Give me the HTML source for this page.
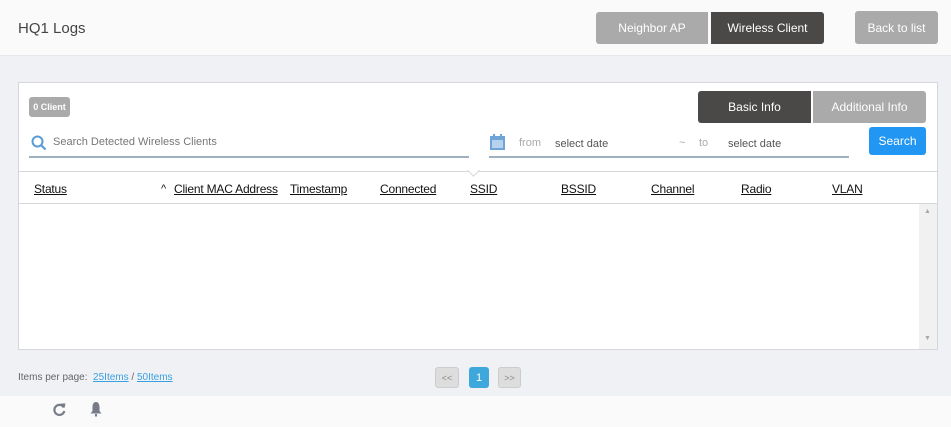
<!DOCTYPE html>
<html><head><style>
*{margin:0;padding:0;box-sizing:border-box}
body{width:951px;height:427px;overflow:hidden;background:#f0f1f5;font-family:"Liberation Sans",sans-serif;position:relative;color:#333}
.a{position:absolute}
.btn{position:absolute;color:#fff;font-size:12px;display:flex;align-items:center;justify-content:center;border-radius:3px}
.h{position:absolute;top:182px;font-size:12px;color:#111;text-decoration:underline;letter-spacing:-0.2px}
</style></head><body>
<div class="a" style="left:0;top:0;width:951px;height:56px;background:#fafafa;border-bottom:1px solid #e6e7ec"></div>
<div class="a" style="left:18px;top:20px;font-size:15px;color:#444">HQ1 Logs</div>
<div class="btn" style="left:596px;top:12px;width:112px;height:32px;background:#aaa;border-radius:3px 0 0 3px">Neighbor AP</div>
<div class="btn" style="left:711px;top:12px;width:113px;height:32px;background:#4a4948;border-radius:0 3px 3px 0">Wireless Client</div>
<div class="btn" style="left:855px;top:11px;width:83px;height:33px;background:#aaa">Back to list</div>

<div class="a" style="left:18px;top:82px;width:920px;height:268px;background:#fff;border:1px solid #d6d7dc"></div>
<div class="btn" style="left:29px;top:97px;width:41px;height:20px;background:#aaa;font-size:9px;font-weight:bold">0 Client</div>
<div class="btn" style="left:698px;top:91px;width:113px;height:32px;background:#4a4948;border-radius:3px 0 0 3px">Basic Info</div>
<div class="btn" style="left:813px;top:91px;width:113px;height:32px;background:#aaa;border-radius:0 3px 3px 0">Additional Info</div>
<div class="btn" style="left:869px;top:127px;width:57px;height:28px;background:#2196f3">Search</div>

<svg class="a" style="left:31px;top:135px" width="16" height="16" viewBox="0 0 16 16"><circle cx="6.5" cy="6.5" r="5" fill="none" stroke="#5b9bd5" stroke-width="2"/><path d="M10 10l4.5 4.5" stroke="#5b9bd5" stroke-width="2.2"/></svg>
<div class="a" style="left:53px;top:136px;font-size:11px;color:#777">Search Detected Wireless Clients</div>
<div class="a" style="left:29px;top:156px;width:440px;height:2px;background:#9fb1c1"></div>

<svg class="a" style="left:490px;top:134px" width="15" height="16" viewBox="0 0 15 16"><rect x="0" y="2" width="15" height="14" fill="#6fa4d8"/><rect x="3" y="0" width="2" height="4" fill="#6fa4d8"/><rect x="10" y="0" width="2" height="4" fill="#6fa4d8"/><rect x="2" y="6" width="11" height="8" fill="#fff" opacity=".5"/></svg>
<div class="a" style="left:519px;top:137px;font-size:11px;color:#aaa">from</div>
<div class="a" style="left:555px;top:138px;font-size:11px;color:#555">select date</div>
<div class="a" style="left:679px;top:137px;font-size:11px;color:#aaa">~</div>
<div class="a" style="left:699px;top:137px;font-size:11px;color:#aaa">to</div>
<div class="a" style="left:728px;top:138px;font-size:11px;color:#555">select date</div>
<div class="a" style="left:489px;top:156px;width:360px;height:2px;background:#9fb1c1"></div>

<div class="a" style="left:19px;top:171px;width:918px;height:1px;background:#d6d7dc"></div>
<div class="a" style="left:19px;top:203px;width:918px;height:1px;background:#d6d7dc"></div>
<div class="a" style="left:469px;top:166px;width:9px;height:9px;background:#fff;border-right:1px solid #d6d7dc;border-bottom:1px solid #d6d7dc;transform:rotate(45deg)"></div>
<div class="h" style="left:34px">Status</div>
<div class="a" style="left:161px;top:183px;font-size:11px;color:#111">^</div>
<div class="h" style="left:174px">Client MAC Address</div>
<div class="h" style="left:290px">Timestamp</div>
<div class="h" style="left:380px">Connected</div>
<div class="h" style="left:470px">SSID</div>
<div class="h" style="left:561px">BSSID</div>
<div class="h" style="left:651px">Channel</div>
<div class="h" style="left:741px">Radio</div>
<div class="h" style="left:832px">VLAN</div>
<div class="a" style="left:919px;top:204px;width:18px;height:145px;background:#f1f1f1"></div>
<div class="a" style="left:924px;top:208px;font-size:7px;color:#aaa">▲</div>
<div class="a" style="left:924px;top:335px;font-size:7px;color:#aaa">▼</div>

<div class="a" style="left:18px;top:372px;font-size:10px;color:#666">Items per page: &nbsp;<span style="color:#3aa0e0;text-decoration:underline">25Items</span> / <span style="color:#3aa0e0;text-decoration:underline">50Items</span></div>
<div class="btn" style="left:435px;top:367px;width:24px;height:21px;background:#ddd;border:1px solid #ccc;color:#888;font-size:9px">&lt;&lt;</div>
<div class="btn" style="left:469px;top:367px;width:20px;height:21px;background:#3ea8dc;font-size:11px">1</div>
<div class="btn" style="left:498px;top:367px;width:23px;height:21px;background:#ddd;border:1px solid #ccc;color:#888;font-size:9px">&gt;&gt;</div>

<div class="a" style="left:0;top:396px;width:951px;height:31px;background:#fafafa"></div>
<svg class="a" style="left:52px;top:402px" width="15" height="15" viewBox="0 0 15 15"><path d="M11.8 5.5A5 5 0 1 0 12.3 9" fill="none" stroke="#777c88" stroke-width="2.2"/><path d="M8.5 1.5l5 0-1 4.5z" fill="#777c88"/></svg>
<svg class="a" style="left:89px;top:401px" width="14" height="16" viewBox="0 0 14 16"><path d="M7 1C4.5 1 3.5 3.5 3.5 6v4L1.5 12.5h11L10.5 10V6C10.5 3.5 9.5 1 7 1z" fill="#777c88"/><rect x="6" y="13" width="2" height="2.5" fill="#777c88"/></svg>
</body></html>
